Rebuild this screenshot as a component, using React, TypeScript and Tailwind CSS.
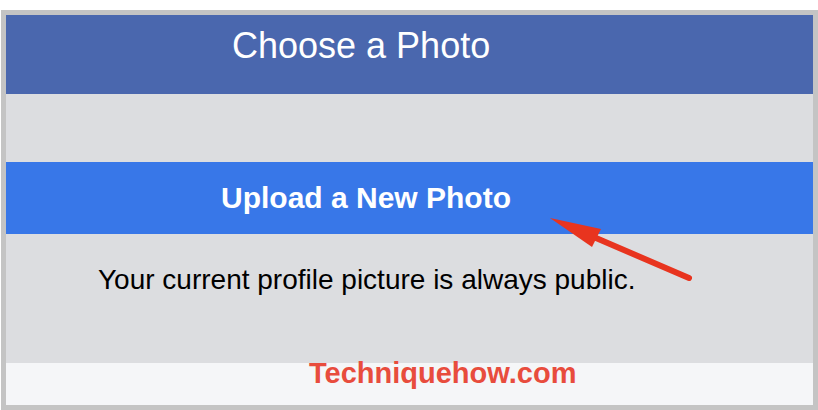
export default function App() {
  return (
    <div className="relative h-[410px] w-[818px] bg-white pt-[10px] pl-[1px] font-['Liberation_Sans',Arial,sans-serif]">
      <div className="flex h-[400px] w-[817px] flex-col border-[5px] border-[#c4c4c4]">
        <div className="h-[79px] bg-[#4a67ae] pl-[226px] pt-[13px]">
          <h1 className="text-[36px] leading-none text-white">Choose a Photo</h1>
        </div>
        <div className="h-[68px] bg-[#dcdde0]" />
        <button className="flex h-[72px] items-center bg-[#3877e8] pl-[215px] text-[30px] font-bold leading-none text-white">
          Upload a New Photo
        </button>
        <div className="h-[129px] bg-[#dcdde0] pl-[92px] pt-[32px]">
          <p className="text-[28px] leading-none text-black">
            Your current profile picture is always public.
          </p>
        </div>
        <div className="flex-1 bg-[#f5f6f8] pl-[303px]">
          <p className="-mt-[4px] text-[29px] font-bold leading-none text-[#e84c3d]">
            Techniquehow.com
          </p>
        </div>
      </div>

      {/* annotation arrow */}
      <svg
        className="pointer-events-none absolute left-0 top-0"
        width="818"
        height="410"
        viewBox="0 0 818 410"
      >
        <line
          x1="596"
          y1="238"
          x2="689"
          y2="278"
          stroke="#e8341f"
          strokeWidth="6"
          strokeLinecap="round"
        />
        <polygon points="550,218 601,229 592,247" fill="#e8341f" />
      </svg>
    </div>
  );
}
